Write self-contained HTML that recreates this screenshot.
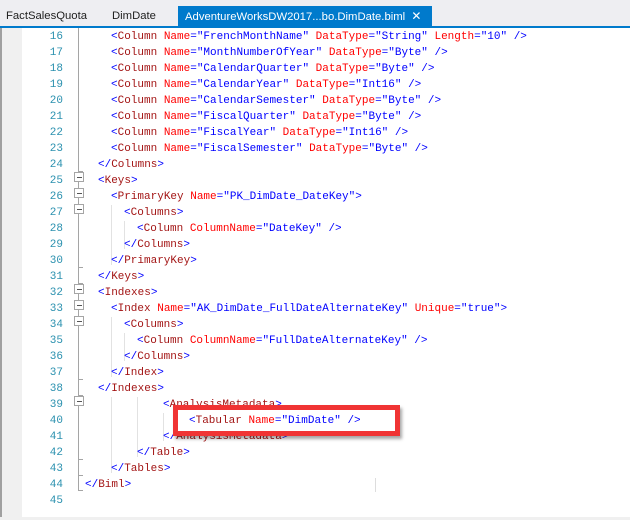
<!DOCTYPE html>
<html><head><meta charset="utf-8"><style>
body{margin:0;width:630px;height:520px;overflow:hidden;background:#fff;position:relative;font-family:"Liberation Sans",sans-serif}
.tabbar{position:absolute;left:0;top:0;width:630px;height:26px;background:#eeeef2}
.tab{position:absolute;top:6px;height:20px;font-size:11.3px;line-height:20px;color:#1e1e1e;white-space:nowrap}
.blue{position:absolute;left:0;top:26px;width:630px;height:2px;background:#007acc}
.strip{position:absolute;left:0;top:28px;width:22px;height:490px;background:#f0f0f0;border-left:2px solid #a0a0a0;box-sizing:border-box}
.bottom{position:absolute;left:0;top:517px;width:630px;height:3px;background:#f0f0f0}
.ln{position:absolute;left:22px;width:41px;text-align:right;color:#2b91af;font:11px/16px "Liberation Mono",monospace}
.code{position:absolute;font:11px/16px "Liberation Mono",monospace;white-space:pre;color:#0000ff}
.e{color:#a31515}.a{color:#ff0000}
.fl{position:absolute;left:78px;width:1px;background:#a5a5a5}
.tick{position:absolute;left:78px;width:5px;height:1px;background:#a5a5a5}
.box{position:absolute;left:74px;width:8px;height:8px;border:1px solid #a5a5a5;background:#fff}
.box:after{content:"";position:absolute;left:2px;top:4px;width:5px;height:1px;background:#555}
.g{position:absolute;width:1px;background:#e2e2e2}
</style></head><body>
<div class="tabbar"></div>
<div class="tab" style="left:6px">FactSalesQuota</div>
<div class="tab" style="left:112px">DimDate</div>
<div class="tab" style="left:178px;width:254px;background:#007acc;color:#fff;padding-left:7px;box-sizing:border-box">AdventureWorksDW2017...bo.DimDate.biml <span style="margin-left:3px;font-size:12px">✕</span></div>
<div class="blue"></div>
<div class="strip"></div>
<div class="bottom"></div>

<div class="fl" style="top:28px;height:462px"></div>
<div class="tick" style="top:171px"></div>
<div class="tick" style="top:267px"></div>
<div class="tick" style="top:283px"></div>
<div class="tick" style="top:379px"></div>
<div class="tick" style="top:395px"></div>
<div class="tick" style="top:459px"></div>
<div class="tick" style="top:475px"></div>
<div class="tick" style="top:490px"></div>
<div class="box" style="top:172px"></div>
<div class="box" style="top:188px"></div>
<div class="box" style="top:204px"></div>
<div class="box" style="top:284px"></div>
<div class="box" style="top:300px"></div>
<div class="box" style="top:316px"></div>
<div class="box" style="top:396px"></div>
<div class="g" style="left:111px;top:205px;height:60px"></div>
<div class="g" style="left:124px;top:221px;height:28px"></div>
<div class="g" style="left:111px;top:317px;height:60px"></div>
<div class="g" style="left:124px;top:333px;height:28px"></div>
<div class="g" style="left:111px;top:397px;height:76px"></div>
<div class="g" style="left:137px;top:397px;height:60px"></div>
<div class="g" style="left:163px;top:413px;height:28px"></div>

<div id="L"></div>
<script>
var lines=[
[2,'<<e>Column</e> <a>Name</a>="FrenchMonthName" <a>DataType</a>="String" <a>Length</a>="10" />'],
[2,'<<e>Column</e> <a>Name</a>="MonthNumberOfYear" <a>DataType</a>="Byte" />'],
[2,'<<e>Column</e> <a>Name</a>="CalendarQuarter" <a>DataType</a>="Byte" />'],
[2,'<<e>Column</e> <a>Name</a>="CalendarYear" <a>DataType</a>="Int16" />'],
[2,'<<e>Column</e> <a>Name</a>="CalendarSemester" <a>DataType</a>="Byte" />'],
[2,'<<e>Column</e> <a>Name</a>="FiscalQuarter" <a>DataType</a>="Byte" />'],
[2,'<<e>Column</e> <a>Name</a>="FiscalYear" <a>DataType</a>="Int16" />'],
[2,'<<e>Column</e> <a>Name</a>="FiscalSemester" <a>DataType</a>="Byte" />'],
[1,'</<e>Columns</e>>'],
[1,'<<e>Keys</e>>'],
[2,'<<e>PrimaryKey</e> <a>Name</a>="PK_DimDate_DateKey">'],
[3,'<<e>Columns</e>>'],
[4,'<<e>Column</e> <a>ColumnName</a>="DateKey" />'],
[3,'</<e>Columns</e>>'],
[2,'</<e>PrimaryKey</e>>'],
[1,'</<e>Keys</e>>'],
[1,'<<e>Indexes</e>>'],
[2,'<<e>Index</e> <a>Name</a>="AK_DimDate_FullDateAlternateKey" <a>Unique</a>="true">'],
[3,'<<e>Columns</e>>'],
[4,'<<e>Column</e> <a>ColumnName</a>="FullDateAlternateKey" />'],
[3,'</<e>Columns</e>>'],
[2,'</<e>Index</e>>'],
[1,'</<e>Indexes</e>>'],
[6,'<<e>AnalysisMetadata</e>>'],
[8,'<<e>Tabular</e> <a>Name</a>="DimDate" />'],
[6,'</<e>AnalysisMetadata</e>>'],
[4,'</<e>Table</e>>'],
[2,'</<e>Tables</e>>'],
[0,'</<e>Biml</e>>'],
[0,'']];
var h='';
lines.forEach(function(l,i){var t=29+i*16;
h+='<div class="ln" style="top:'+t+'px">'+(16+i)+'</div>';
var s=l[1].replace(/<e>/g,'\u0001').replace(/<\/e>/g,'\u0002').replace(/<a>/g,'\u0003').replace(/<\/a>/g,'\u0004');
s=s.replace(/&/g,'&amp;').replace(/</g,'&lt;').replace(/>/g,'&gt;');
s=s.replace(/\u0001/g,'<span class="e">').replace(/\u0003/g,'<span class="a">').replace(/[\u0002\u0004]/g,'</span>');
h+='<div class="code" style="left:'+(85+l[0]*13)+'px;top:'+t+'px">'+s+'</div>';});
document.getElementById('L').innerHTML=h;
</script>
<div style="position:absolute;left:173px;top:405px;width:217px;height:21px;border:5px solid #f03434;background:transparent;box-shadow:2px 3px 3px rgba(0,0,0,.35)"></div>
<div style="position:absolute;left:178px;top:410px;width:217px;height:21px;background:#fff"></div>
<div class="code" style="left:189px;top:413px"><span>&lt;</span><span class="e">Tabular</span> <span class="a">Name</span>="DimDate" /&gt;</div>
<div style="position:absolute;left:375px;top:478px;width:1px;height:14px;background:#ddd"></div>
</body></html>
